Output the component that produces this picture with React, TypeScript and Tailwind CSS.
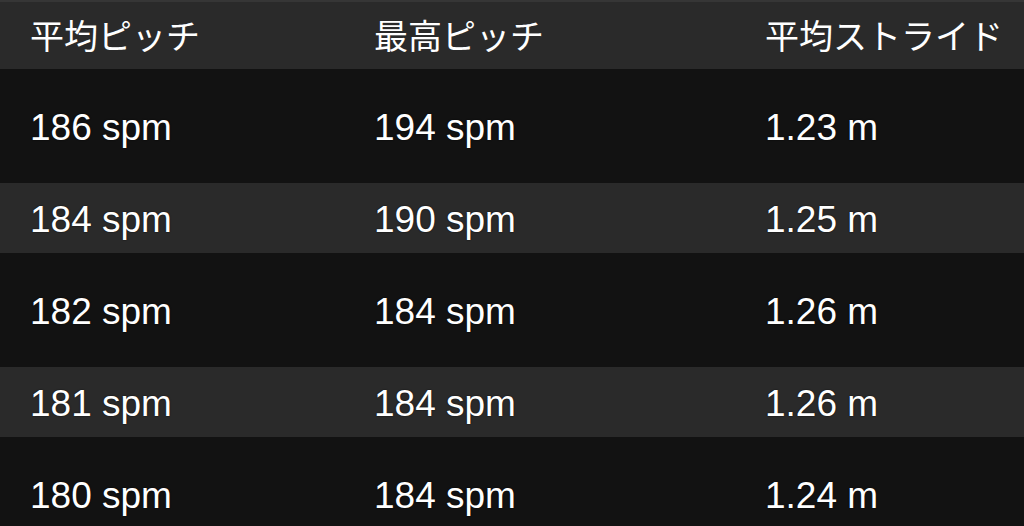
const headers = ['平均ピッチ', '最高ピッチ', '平均ストライド'];

const rows = [
  { cadence: '186 spm', max: '194 spm', stride: '1.23 m', tall: true },
  { cadence: '184 spm', max: '190 spm', stride: '1.25 m', tall: false },
  { cadence: '182 spm', max: '184 spm', stride: '1.26 m', tall: true },
  { cadence: '181 spm', max: '184 spm', stride: '1.26 m', tall: false },
  { cadence: '180 spm', max: '184 spm', stride: '1.24 m', tall: true },
];

const cols = 'grid grid-cols-[344px_391px_1fr] pl-[30px] items-center';

export default function App() {
  return (
    <div
      className="h-[526px] w-[1024px] overflow-hidden bg-[#121212] text-white"
      style={{ fontFamily: '"Liberation Sans", "Noto Sans CJK JP", sans-serif' }}
    >
      {/* header */}
      <div className={`${cols} h-[69px] bg-[#2a2a2a] border-t-2 border-[#363636] text-[34px] leading-none`}>
        {headers.map((h) => (
          <span key={h} className="-mt-[2px]" style={{ fontFamily: '"Noto Sans CJK JP", sans-serif' }}>
            {h}
          </span>
        ))}
      </div>

      {rows.map((r, i) => (
        <div
          key={i}
          className={`${cols} text-[37px] leading-none [text-shadow:0_0_1.5px_#000] ${
            r.tall ? 'h-[114px] bg-[#121212]' : 'h-[70px] bg-[#2a2a2a]'
          }`}
        >
          <span className="mt-[2px]">{r.cadence}</span>
          <span className="mt-[2px]">{r.max}</span>
          <span className="mt-[2px]">{r.stride}</span>
        </div>
      ))}
    </div>
  );
}
